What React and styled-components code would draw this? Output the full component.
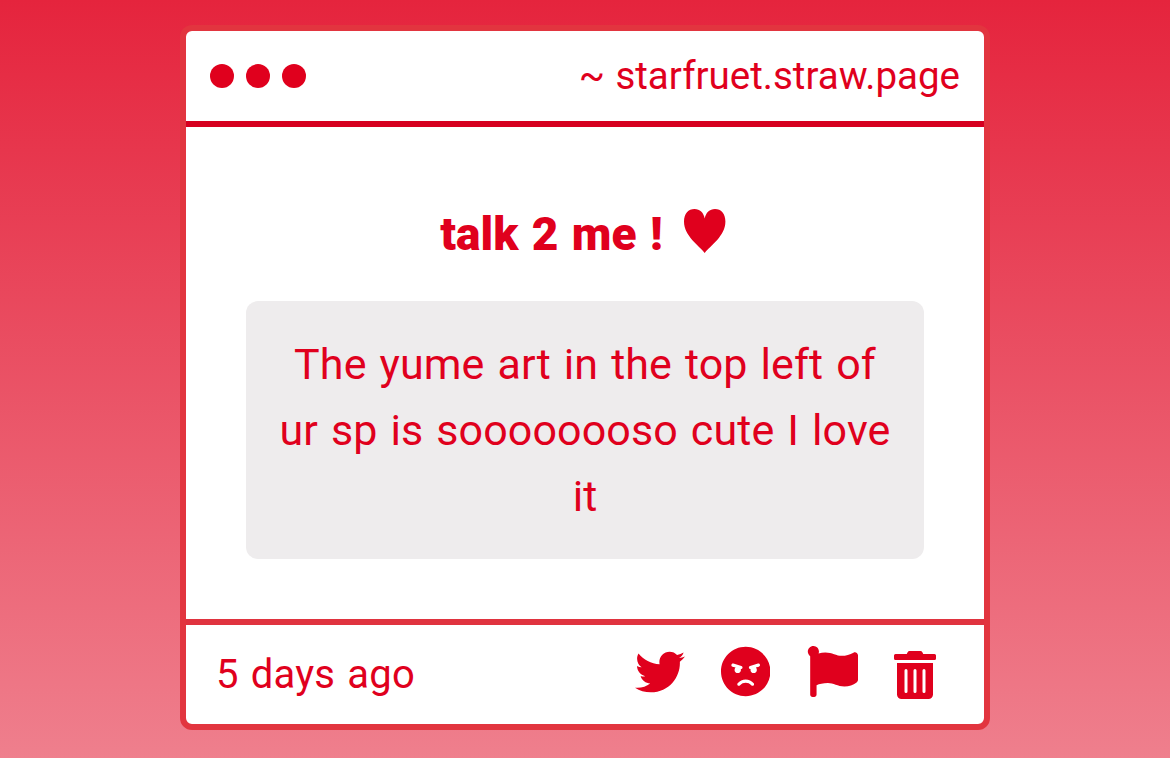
import React from "react";
import styled, { createGlobalStyle } from "styled-components";
import { FaTwitter, FaAngry, FaFlag, FaTrashAlt } from "react-icons/fa";

const GlobalStyle = createGlobalStyle`
  * {
    box-sizing: border-box;
  }

  body {
    margin: 0;
    font-family: Roboto, "Liberation Sans", sans-serif;
    color: #e0001d;
  }
`;

const Page = styled.div`
  height: 758px;
  padding-top: 25px;
  background: linear-gradient(180deg, #e5243d 0%, #ef7f8d 100%);
`;

const Window = styled.main`
  display: flex;
  flex-direction: column;
  width: 810px;
  height: 705px;
  margin: 0 auto;
  border: 6px solid #e2353f;
  border-radius: 12px;
  background: #fff;
  overflow: hidden;
`;

const TitleBar = styled.header`
  display: flex;
  align-items: center;
  justify-content: space-between;
  height: 96px;
  padding: 0 24px;
  border-bottom: 6px solid #d6001f;
`;

const Dots = styled.div`
  display: flex;
  gap: 12px;
`;

const Dot = styled.span`
  width: 24px;
  height: 24px;
  border-radius: 50%;
  background: #e0001d;
`;

const Address = styled.span`
  font-size: 38.5px;
  line-height: 48px;
  word-spacing: 1px;
`;

const Content = styled.section`
  display: flex;
  flex-direction: column;
  flex: 1;
  padding: 74px 60px 60px;
`;

const Heading = styled.h1`
  display: flex;
  justify-content: center;
  gap: 21px;
  height: 66px;
  margin: 0 4px 34px 0;
  font-size: 46px;
  font-weight: 900;
  line-height: 67px;
  word-spacing: 2px;
`;

const Heart = styled.svg`
  width: 42px;
  height: 44px;
  margin-top: 8px;
`;

const Message = styled.p`
  flex: 1;
  margin: 0;
  padding: 30px;
  border-radius: 12px;
  background: #eeeced;
  font-size: 43px;
  line-height: 66px;
  letter-spacing: 0.1px;
  word-spacing: 2.2px;
  text-align: center;
`;

const Footer = styled.footer`
  display: flex;
  align-items: center;
  justify-content: space-between;
  height: 105px;
  padding: 0 48px 0 30px;
  border-top: 6px solid #e0333f;
`;

const Time = styled.span`
  font-size: 40px;
  line-height: 48px;
  letter-spacing: 0.2px;
  word-spacing: 2px;
`;

const Actions = styled.div`
  display: flex;
  align-items: center;
  gap: 36.3px;
`;

const Action = styled.button`
  display: flex;
  padding: 0;
  border: none;
  background: none;
  color: inherit;
  margin-top: ${(props) => props.$drop}px;
  cursor: pointer;

  svg {
    width: ${(props) => props.$width}px;
    height: ${(props) => props.$height}px;
  }
`;

const actions = [
  { label: "Share", Icon: FaTwitter, width: 50, height: 50, drop: -6 },
  { label: "Block", Icon: FaAngry, width: 49.4, height: 51, drop: -6 },
  { label: "Report", Icon: FaFlag, width: 51, height: 51, drop: -6 },
  { label: "Delete", Icon: FaTrashAlt, width: 42, height: 48, drop: 0 },
];

const App = () => {
  return (
    <Page>
      <GlobalStyle />
      <Window>
        <TitleBar>
          <Dots>
            <Dot />
            <Dot />
            <Dot />
          </Dots>
          <Address>~ starfruet.straw.page</Address>
        </TitleBar>
        <Content>
          <Heading>
            talk 2 me !
            <Heart viewBox="0 0 42 44" fill="currentColor">
              <path d="M20.700 44C15 36.500 0 27 0 12.500C0 4.500 4.500 0 10.500 0C16 0 19.500 3.500 20.700 9.500C22 3.500 25.500 0 31 0C37 0 41.400 4.500 41.400 12.500C41.400 27 26.500 36.500 20.700 44Z" />
            </Heart>
          </Heading>
          <Message>
            The yume art in the top left of ur sp is soooooooso cute I love it
          </Message>
        </Content>
        <Footer>
          <Time>5 days ago</Time>
          <Actions>
            {actions.map(({ label, Icon, width, height, drop }) => (
              <Action
                key={label}
                aria-label={label}
                $width={width}
                $height={height}
                $drop={drop}
              >
                <Icon />
              </Action>
            ))}
          </Actions>
        </Footer>
      </Window>
    </Page>
  );
};

export default App;
